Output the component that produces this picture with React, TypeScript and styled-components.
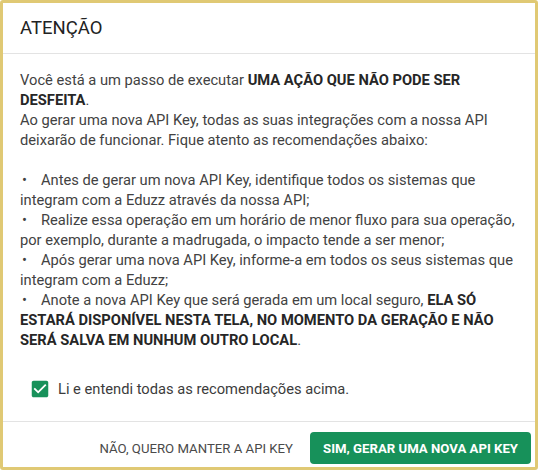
import { FC } from "react"
import styled, { createGlobalStyle } from "styled-components"

const GlobalStyle = createGlobalStyle`
  html, body {
    margin: 0;
    padding: 0;
    background: #ffffff;
  }
  body {
    font-family: Roboto, "Liberation Sans", Arial, sans-serif;
  }
`

const Dialog = styled.div`
  box-sizing: border-box;
  width: 538px;
  height: 470px;
  border: 3px solid #e0c974;
  border-radius: 3px;
  background: #ffffff;
  display: flex;
  flex-direction: column;
`

const Header = styled.header`
  padding: 12px 17px;
  border-bottom: 1px solid #e3e3e3;
`

const Title = styled.h2`
  margin: 0;
  font-size: 18.5px;
  line-height: 26px;
  font-weight: 400;
  color: #222222;
`

const Content = styled.section`
  flex: 1;
  padding: 16px 17px 0 17px;
  display: flex;
  flex-direction: column;
`

const Text = styled.p`
  margin: 0;
  font-size: 14.7px;
  line-height: 20px;
  color: #424242;

  strong {
    font-weight: 700;
    color: #262626;
  }
`

const Spacer = styled.div`
  height: 20px;
`

const Bullet = styled.span`
  margin-left: 2px;
  margin-right: 14px;
`

const CheckRow = styled.label`
  display: flex;
  align-items: center;
  gap: 7px;
  height: 42px;
  margin-top: 18px;
  padding-left: 9px;
  font-size: 14.7px;
  color: #3c3c3c;
`

const Footer = styled.footer`
  display: flex;
  justify-content: flex-end;
  align-items: flex-start;
  padding: 10px 4px 3px 4px;
  border-top: 1px solid #e3e3e3;
`

const Button = styled.button<{ $primary?: boolean }>`
  height: 32px;
  border: none;
  border-radius: 4px;
  font-family: Roboto, "Liberation Sans", Arial, sans-serif;
  font-size: 13.2px;
  text-transform: uppercase;
  cursor: pointer;
  padding: ${(p) => (p.$primary ? "0 13px" : "0 8px")};
  margin-left: ${(p) => (p.$primary ? "9px" : "0")};
  font-weight: ${(p) => (p.$primary ? 700 : 400)};
  background: ${(p) => (p.$primary ? "#17915a" : "transparent")};
  color: ${(p) => (p.$primary ? "#ffffff" : "#4a4a4a")};
`

const CheckIcon: FC = () => (
  <svg width="22" height="22" viewBox="0 0 24 24">
    <path
      fill="#17915a"
      d="M19 3H5c-1.11 0-2 .9-2 2v14c0 1.1.89 2 2 2h14c1.11 0 2-.9 2-2V5c0-1.1-.89-2-2-2zm-9 14l-5-5 1.41-1.41L10 14.17l7.59-7.59L19 8l-9 9z"
    />
  </svg>
)

const App: FC = () => {
  return (
    <>
      <GlobalStyle />
      <Dialog>
        <Header>
          <Title>ATENÇÃO</Title>
        </Header>
        <Content>
          <Text>
            Você está a um passo de executar <strong>UMA AÇÃO QUE NÃO PODE SER DESFEITA</strong>.
            <br />
            Ao gerar uma nova API Key, todas as suas integrações com a nossa API deixarão de funcionar. Fique atento as
            recomendações abaixo:
          </Text>
          <Spacer />
          <Text>
            <Bullet>•</Bullet>Antes de gerar um nova API Key, identifique todos os sistemas que integram com a Eduzz
            através da nossa API;
            <br />
            <Bullet>•</Bullet>Realize essa operação em um horário de menor fluxo para sua operação, por exemplo, durante
            a madrugada, o impacto tende a ser menor;
            <br />
            <Bullet>•</Bullet>Após gerar uma nova API Key, informe-a em todos os seus sistemas que integram com a Eduzz;
            <br />
            <Bullet>•</Bullet>Anote a nova API Key que será gerada em um local seguro,{" "}
            <strong>ELA SÓ ESTARÁ DISPONÍVEL NESTA TELA, NO MOMENTO DA GERAÇÃO E NÃO SERÁ SALVA EM NUNHUM OUTRO LOCAL</strong>.
          </Text>
          <CheckRow>
            <CheckIcon />
            Li e entendi todas as recomendações acima.
          </CheckRow>
        </Content>
        <Footer>
          <Button>Não, quero manter a API Key</Button>
          <Button $primary>Sim, gerar uma nova API Key</Button>
        </Footer>
      </Dialog>
    </>
  )
}

export default App
